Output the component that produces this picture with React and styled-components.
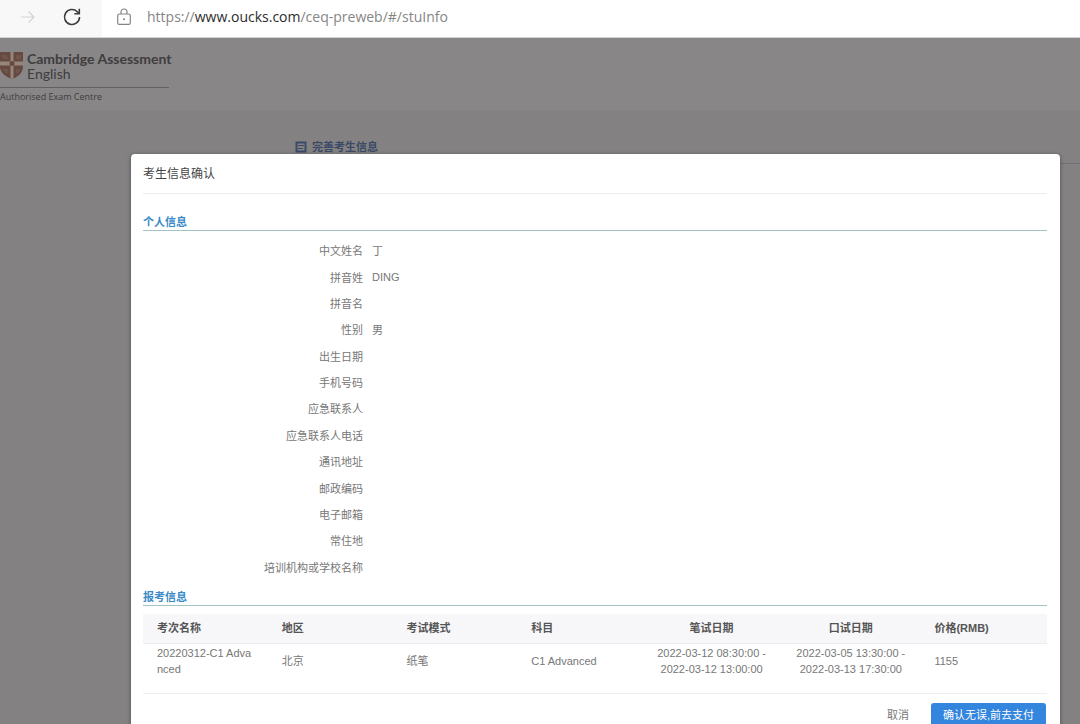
import React from "react";
import styled, { createGlobalStyle } from "styled-components";

const GlobalStyle = createGlobalStyle`
    *{
        box-sizing:border-box;
    }
    body{
        margin:0;
        font-family:"Liberation Sans", "Noto Sans CJK SC", sans-serif;
        font-size:11px;
        color:#777;
    }
    svg{
        flex:none;
    }
`;

const Screen = styled.div`
    display:flex;
    flex-direction:column;
    height:100vh;
    overflow:hidden;
`;

const BrowserBar = styled.header`
    display:flex;
    align-items:center;
    flex:none;
    height:38px;
    padding-bottom:4px;
    background:#f8f8f8;
    border-bottom:1px solid #d2d2d4;
`;

const NavButton = styled.button`
    display:flex;
    align-items:center;
    justify-content:center;
    width:44px;
    height:32px;
    padding:0;
    border:none;
    background:none;
    color:${props => props.disabled ? '#d3d3d3' : '#3c3c3c'};
    &:first-child{
        width:50px;
        padding-left:6px;
    }
`;

const AddressBar = styled.div`
    display:flex;
    align-items:center;
    flex:1;
    gap:16px;
    height:37px;
    margin:0 0 -4px 8px;
    padding:0 15px 3px;
    background:#fff;
    color:#858585;
`;

const Address = styled.span`
    font-family:"Open Sans", sans-serif;
    font-size:14px;
    line-height:20px;
    b{
        font-weight:400;
        color:#2c2c2c;
    }
`;

const Page = styled.main`
    position:relative;
    flex:1;
    min-height:0;
    overflow:hidden;
    background:#838182;
`;

const PageHeader = styled.div`
    height:72px;
    padding-top:13px;
    background:#888687;
`;

const Logo = styled.div`
    width:169px;
    font-family:"Open Sans", sans-serif;
    color:#3f3d3e;
`;

const LogoTop = styled.div`
    display:flex;
    gap:3px;
    height:37px;
    border-bottom:1px solid #636162;
    white-space:nowrap;
`;

const LogoName = styled.div`
    font-family:Lato, sans-serif;
    font-size:14px;
    line-height:15px;
    b, span{
        display:block;
    }
`;

const LogoNote = styled.div`
    font-size:9px;
    line-height:18px;
`;

const PageTitle = styled.h1`
    display:flex;
    gap:5px;
    height:54px;
    margin:0 0 0 295px;
    padding-top:29px;
    border-bottom:1px solid #737173;
    font-size:11px;
    line-height:16px;
    color:#3b4a66;
    svg{
        margin-top:2px;
    }
`;

const Overlay = styled.div`
    position:absolute;
    inset:0;
    padding:116px 20px 0 131px;
`;

const DialogBlock = styled.section`
    padding:0 13px 20px 12px;
    border-radius:4px;
    background:#fff;
    box-shadow:0 1px 4px rgba(0,0,0,0.4);
`;

const DialogTitle = styled.h2`
    margin:0;
    padding-top:2px;
    border-bottom:1px solid #ececec;
    font-size:12px;
    font-weight:400;
    line-height:37px;
    color:#444;
`;

const SectionTitle = styled.h3`
    margin:0;
    padding-top:${props => props.$first ? '20px' : '8px'};
    border-bottom:1px solid #a3c2c6;
    font-size:11px;
    line-height:16px;
    color:#3a8ac8;
`;

const InfoList = styled.dl`
    display:grid;
    grid-auto-rows:1fr;
    height:343px;
    margin:6px 0 1px;
`;

const InfoRow = styled.div`
    display:flex;
    align-items:center;
    gap:9px;
    dt{
        width:220px;
        text-align:right;
    }
    dd{
        margin:0;
    }
`;

const ExamTable = styled.table`
    width:100%;
    margin-top:8px;
    border-collapse:collapse;
    border-bottom:1px solid #efefef;
    table-layout:fixed;
    line-height:16px;
`;

const HeadCell = styled.th`
    width:${props => props.$width};
    height:29px;
    padding:0 14px;
    border-bottom:1px solid #ececee;
    background:#f7f7f9;
    text-align:${props => props.$align || 'left'};
    color:#555;
`;

const Cell = styled.td`
    height:50px;
    padding:1px 14px 15px;
    text-align:${props => props.$align || 'left'};
    word-break:break-all;
`;

const ButtonGroup = styled.div`
    display:flex;
    justify-content:flex-end;
    gap:10px;
    padding:9px 1px 0 0;
`;

const Button = styled.button`
    height:24px;
    padding:0 12px;
    border:none;
    border-radius:3px;
    background:${props => props.$primary ? '#3385dd' : 'none'};
    color:${props => props.$primary ? '#fff' : '#777'};
    font-family:inherit;
    font-size:11px;
    line-height:24px;
    white-space:nowrap;
`;

const info = [
    ['中文姓名', '丁'],
    ['拼音姓', 'DING'],
    ['拼音名', ''],
    ['性别', '男'],
    ['出生日期', ''],
    ['手机号码', ''],
    ['应急联系人', ''],
    ['应急联系人电话', ''],
    ['通讯地址', ''],
    ['邮政编码', ''],
    ['电子邮箱', ''],
    ['常住地', ''],
    ['培训机构或学校名称', '']
];

const columns = [
    {title:'考次名称', width:'13.8%', value:'20220312-C1 Advanced'},
    {title:'地区', width:'13.8%', value:'北京'},
    {title:'考试模式', width:'13.8%', value:'纸笔'},
    {title:'科目', width:'13.8%', value:'C1 Advanced'},
    {title:'笔试日期', width:'15.4%', align:'center', value:'2022-03-12 08:30:00 - 2022-03-12 13:00:00'},
    {title:'口试日期', width:'15.4%', align:'center', value:'2022-03-05 13:30:00 - 2022-03-13 17:30:00'},
    {title:'价格(RMB)', width:'14%', value:'1155'}
];

function ForwardIcon(){
    return(
        <svg width="16" height="16" viewBox="0 0 16 16" fill="none" stroke="currentColor" strokeWidth="1.2">
            <path d="M1 8h13M8.5 2.5L14 8l-5.5 5.5"/>
        </svg>
    );
}

function ReloadIcon(){
    return(
        <svg width="20" height="20" viewBox="0 0 20 20" fill="none" stroke="currentColor" strokeWidth="1.6">
            <path d="M17.5 10A7.500 7.500 0 1 1 15.300 4.700L17 6.500"/>
            <path d="M17.300 1.800V6.700H12.400"/>
        </svg>
    );
}

function LockIcon(){
    return(
        <svg width="14" height="18" viewBox="0 0 14 18" fill="none" stroke="currentColor" strokeWidth="1.2">
            <rect x="0.700" y="6" width="12.600" height="10.400" rx="1.600"/>
            <path d="M4 6V4a3 3 0 0 1 6 0v2"/>
            <circle cx="7" cy="11.200" r="1" fill="currentColor" stroke="none"/>
        </svg>
    );
}

function Shield(){
    return(
        <svg width="24" height="29" viewBox="0 0 24 29">
            <path d="M0 1H23V15C23 22 18 26 12 28C6 26 1 22 0 17Z" fill="#664a42"/>
            <path d="M10.500 1h3v9.500H23v4h-9.500v13l-1.500 .5-1.500-.5v-13H0v-4h10.500z" fill="#96857b"/>
            <circle cx="12" cy="12.500" r="2.500" fill="#664a42"/>
            <path d="M2 5h5M3 7h5M16 5h5M16 7h5M3 19h5M16 19h4M5 21h3M16 21h3" stroke="#7d6053" strokeWidth="1"/>
        </svg>
    );
}

function FormIcon(){
    return(
        <svg width="12" height="12" viewBox="0 0 12 12" fill="none" stroke="currentColor">
            <rect x="1.500" y="1.500" width="9" height="9" strokeWidth="2"/>
            <path d="M3 4.500h6M3 7.500h5" strokeWidth="1"/>
        </svg>
    );
}

function ConfirmDialog(){
    return(
        <Overlay>
            <DialogBlock role="dialog" aria-labelledby="dialog-title">
                <DialogTitle id="dialog-title">考生信息确认</DialogTitle>
                <SectionTitle $first>个人信息</SectionTitle>
                <InfoList>
                    {info.map(([label, value]) => (
                        <InfoRow key={label}>
                            <dt>{label}</dt>
                            <dd>{value}</dd>
                        </InfoRow>
                    ))}
                </InfoList>
                <SectionTitle>报考信息</SectionTitle>
                <ExamTable>
                    <thead>
                        <tr>
                            {columns.map(c => (
                                <HeadCell key={c.title} $width={c.width} $align={c.align}>{c.title}</HeadCell>
                            ))}
                        </tr>
                    </thead>
                    <tbody>
                        <tr>
                            {columns.map(c => (
                                <Cell key={c.title} $align={c.align}>{c.value}</Cell>
                            ))}
                        </tr>
                    </tbody>
                </ExamTable>
                <ButtonGroup>
                    <Button>取消</Button>
                    <Button $primary>确认无误,前去支付</Button>
                </ButtonGroup>
            </DialogBlock>
        </Overlay>
    );
}

function App(){
    return(
        <Screen>
            <GlobalStyle/>
            <BrowserBar>
                <NavButton disabled aria-label="Forward"><ForwardIcon/></NavButton>
                <NavButton aria-label="Reload"><ReloadIcon/></NavButton>
                <AddressBar>
                    <LockIcon/>
                    <Address>https://<b>www.oucks.com</b>/ceq-preweb/#/stuInfo</Address>
                </AddressBar>
            </BrowserBar>
            <Page>
                <PageHeader>
                    <Logo>
                        <LogoTop>
                            <Shield/>
                            <LogoName><b>Cambridge Assessment</b><span>English</span></LogoName>
                        </LogoTop>
                        <LogoNote>Authorised Exam Centre</LogoNote>
                    </Logo>
                </PageHeader>
                <PageTitle><FormIcon/>完善考生信息</PageTitle>
                <ConfirmDialog/>
            </Page>
        </Screen>
    );
}

export default App;
